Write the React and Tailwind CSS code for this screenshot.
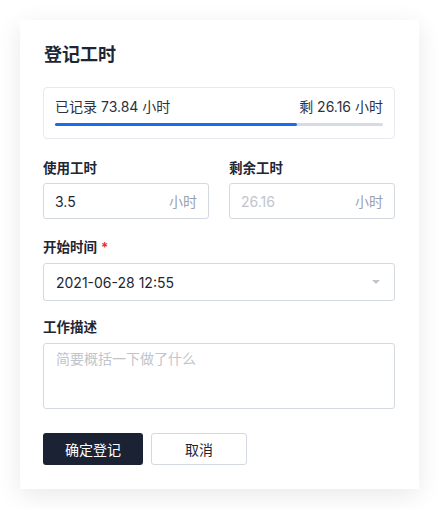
import React from 'react';

const FONT = { fontFamily: '"Inter", "Noto Sans CJK SC", sans-serif' };

function Field({ label, required, children, className = '' }) {
  return (
    <div className={className}>
      <div className="text-[13.5px] font-semibold leading-[20px] text-[#1f2633]">
        {label}
        {required && <span className="ml-1 text-[#e5252a]">*</span>}
      </div>
      {children}
    </div>
  );
}

export default function App() {
  const used = 73.84;
  const total = 100;

  return (
    <div className="min-h-[509px] bg-white px-5 pt-5" style={FONT}>
      <div className="w-[399px] bg-white pl-[23px] pr-6 pt-[22px] pb-6 shadow-[0_6px_24px_rgba(0,0,0,0.09)]">
        <h2 className="ml-px text-[18px] font-semibold leading-[26px] text-[#1f2633]">登记工时</h2>

        <div className="mt-[19px] rounded-[4px] border border-[#e6e9ee] px-[11px] pt-[9px] pb-3">
          <div className="flex justify-between text-[14px] leading-[20px] text-[#2b3240]">
            <span>已记录 73.84 小时</span>
            <span>剩 26.16 小时</span>
          </div>
          <div className="mt-[6px] h-[3px] w-full rounded-full bg-[#d6dbe4]">
            <div className="h-full rounded-full bg-[#1a6de8]" style={{ width: `${(used / total) * 100}%` }} />
          </div>
        </div>

        <div className="mt-[19px] grid grid-cols-2 gap-5">
          <Field label="使用工时">
            <div className="mt-[5px] flex h-9 items-center justify-between rounded-[3px] border border-[#d3d8e1] px-[11px] text-[14px]">
              <span className="text-[#1f2633]">3.5</span>
              <span className="text-[#9aa1ad]">小时</span>
            </div>
          </Field>
          <Field label="剩余工时">
            <div className="mt-[5px] flex h-9 items-center justify-between rounded-[3px] border border-[#d3d8e1] px-[11px] text-[14px]">
              <span className="text-[#c0c5cd]">26.16</span>
              <span className="text-[#9aa1ad]">小时</span>
            </div>
          </Field>
        </div>

        <Field label="开始时间" required className="mt-[18px]">
          <div className="mt-[6px] flex h-[38px] items-center justify-between rounded-[3px] border border-[#d3d8e1] pl-[12px] pr-[14px] text-[14px] text-[#1f2633]">
            <span>2021-06-28 12:55</span>
            <span className="h-0 w-0 border-x-[4px] border-t-[4px] border-x-transparent border-t-[#c0c5cd]" />
          </div>
        </Field>

        <Field label="工作描述" className="mt-4">
          <div className="mt-[6px] h-[66px] rounded-[3px] border border-[#d3d8e1] px-[12px] pt-[5px] text-[14px] leading-[20px] text-[#c0c5cd]">
            简要概括一下做了什么
          </div>
        </Field>

        <div className="mt-6 flex gap-2">
          <button className="h-8 w-[100px] rounded-[3px] bg-[#1a2234] text-[14px] text-white">确定登记</button>
          <button className="h-8 w-[96px] rounded-[3px] border border-[#d3d8e1] bg-white text-[14px] text-[#1f2633]">取消</button>
        </div>
      </div>
    </div>
  );
}
